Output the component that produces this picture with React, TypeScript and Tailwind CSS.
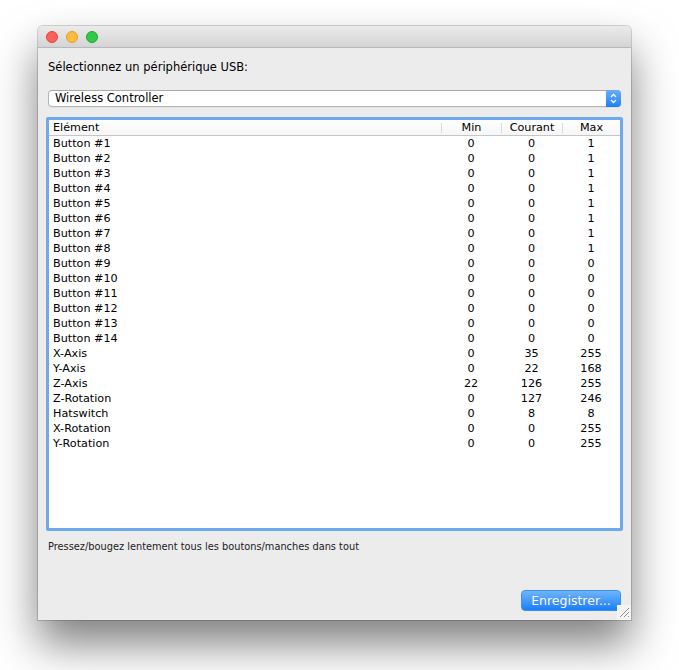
import React from 'react';

type Row = { name: string; min: number; cur: number; max: number };

const rows: Row[] = [
  { name: 'Button #1', min: 0, cur: 0, max: 1 },
  { name: 'Button #2', min: 0, cur: 0, max: 1 },
  { name: 'Button #3', min: 0, cur: 0, max: 1 },
  { name: 'Button #4', min: 0, cur: 0, max: 1 },
  { name: 'Button #5', min: 0, cur: 0, max: 1 },
  { name: 'Button #6', min: 0, cur: 0, max: 1 },
  { name: 'Button #7', min: 0, cur: 0, max: 1 },
  { name: 'Button #8', min: 0, cur: 0, max: 1 },
  { name: 'Button #9', min: 0, cur: 0, max: 0 },
  { name: 'Button #10', min: 0, cur: 0, max: 0 },
  { name: 'Button #11', min: 0, cur: 0, max: 0 },
  { name: 'Button #12', min: 0, cur: 0, max: 0 },
  { name: 'Button #13', min: 0, cur: 0, max: 0 },
  { name: 'Button #14', min: 0, cur: 0, max: 0 },
  { name: 'X-Axis', min: 0, cur: 35, max: 255 },
  { name: 'Y-Axis', min: 0, cur: 22, max: 168 },
  { name: 'Z-Axis', min: 22, cur: 126, max: 255 },
  { name: 'Z-Rotation', min: 0, cur: 127, max: 246 },
  { name: 'Hatswitch', min: 0, cur: 8, max: 8 },
  { name: 'X-Rotation', min: 0, cur: 0, max: 255 },
  { name: 'Y-Rotation', min: 0, cur: 0, max: 255 },
];

const cols = 'grid grid-cols-[392px_60px_61px_1fr]';

export default function App() {
  return (
    <div className="min-h-[670px] w-[679px] bg-white pt-[26px] pl-[38px] font-['DejaVu_Sans',sans-serif] text-black">
      {/* Window */}
      <div className="relative flex h-[594px] w-[593px] flex-col rounded-t-[5px] bg-[#ececec] shadow-[0_0_0_1px_rgba(0,0,0,0.16),0_24px_44px_rgba(0,0,0,0.5)]">
        {/* Title bar */}
        <div className="flex h-[22px] shrink-0 items-center gap-[8px] rounded-t-[5px] border-b border-[#b8b8b8] bg-gradient-to-b from-[#ebebeb] to-[#d4d4d4] pl-[8px]">
          <span className="h-[12px] w-[12px] rounded-full border border-[#e0443e] bg-[#fc605b]" />
          <span className="h-[12px] w-[12px] rounded-full border border-[#dea123] bg-[#fdbc40]" />
          <span className="h-[12px] w-[12px] rounded-full border border-[#1aab29] bg-[#34c84a]" />
        </div>

        {/* Content */}
        <div className="flex flex-1 flex-col px-[10px]">
          <div className="mt-[12px] h-[14px] text-[11.5px] leading-[14px]">Sélectionnez un périphérique USB:</div>

          {/* Popup button */}
          <div className="mt-[16px] flex h-[17px] items-stretch rounded-[4px] border border-[#b5b5b5] border-t-[#a9a9a9] bg-white shadow-[0_1px_0_rgba(0,0,0,0.04)]">
            <div className="flex-1 pl-[6px] text-[11.5px] leading-[15px]">Wireless Controller</div>
            <div className="-my-px -mr-px flex w-[15px] flex-col items-center justify-center rounded-r-[4px] bg-gradient-to-b from-[#68aef9] to-[#1a7ff6]">
              <svg width="7" height="11" viewBox="0 0 7 11" fill="none" stroke="white" strokeWidth="1.3">
                <path d="M1 4 L3.5 1.5 L6 4" />
                <path d="M1 7 L3.5 9.5 L6 7" />
              </svg>
            </div>
          </div>

          {/* Table with focus ring */}
          <div className="-mx-[2px] mt-[10px] h-[414px] rounded-[2px] border-[3px] border-[#6ea8ee] bg-white">
            <div className={`${cols} h-[16px] border-b border-[#c6c6c6] bg-gradient-to-b from-white to-[#f6f6f6] text-[11.2px] leading-[15px]`}>
              <div className="pl-[4px]">Elément</div>
              <div className="flex items-center">
                <span className="h-[10px] w-px bg-[#d9d9d9]" />
                <span className="flex-1 text-center">Min</span>
              </div>
              <div className="flex items-center">
                <span className="h-[10px] w-px bg-[#d9d9d9]" />
                <span className="flex-1 text-center">Courant</span>
              </div>
              <div className="flex items-center">
                <span className="h-[10px] w-px bg-[#d9d9d9]" />
                <span className="flex-1 text-center">Max</span>
              </div>
            </div>
            {rows.map((r) => (
              <div key={r.name} className={`${cols} h-[15px] text-[11.2px] leading-[15px]`}>
                <div className="pl-[4px]">{r.name}</div>
                <div className="text-center">{r.min}</div>
                <div className="text-center">{r.cur}</div>
                <div className="text-center">{r.max}</div>
              </div>
            ))}
          </div>

          <div className="mt-[9px] h-[14px] text-[9.8px] leading-[14px] text-[#1b1b1b]">
            Pressez/bougez lentement tous les boutons/manches dans tout
          </div>

          <div className="mt-auto mb-[9px] flex justify-end">
            <button className="h-[21px] w-[100px] rounded-[4px] border border-[#3d8ef5] bg-gradient-to-b from-[#6db4fb] to-[#137ffc] text-[12.5px] leading-[19px] text-white [text-shadow:0_0_1px_rgba(0,0,0,0.2)]">
              Enregistrer...
            </button>
          </div>
        </div>

        {/* Resize grip */}
        <div className="absolute right-0 bottom-0 flex h-[15px] w-[14px] items-center justify-center bg-[#f4f4f4]">
          <svg width="11" height="11" viewBox="0 0 11 11" stroke="#8d8d8d" strokeWidth="1">
            <path d="M10 1 L1 10" />
            <path d="M10 5 L5 10" />
            <path d="M10 9 L9 10" />
          </svg>
        </div>
      </div>
    </div>
  );
}
